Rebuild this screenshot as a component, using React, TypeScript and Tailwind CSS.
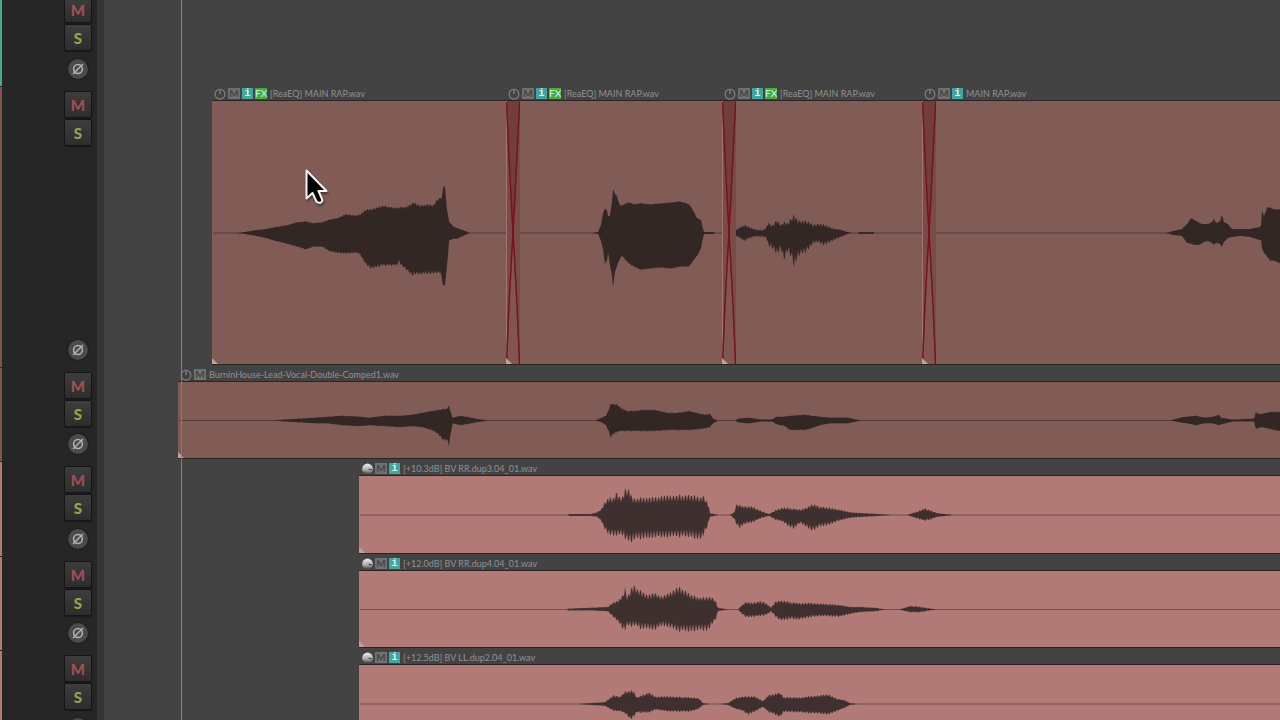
import React, { useMemo } from 'react';

// Left edge of the timeline, every clip position is counted from the window edge
const TIMELINE_LEFT = 104;

// [x, height above the centre line, height below the centre line]
type Point = [number, number, number];

type Clip = {
  name: string;
  start: number;
  end?: number;
  knob?: boolean;
  info?: boolean;
  fx?: boolean;
  crossfade?: boolean;
  ribs: number;
  wave: Point[];
};

type Track = {
  id: string;
  height: string;
  strip: string;
  clipColor: string;
  waveColor: string;
  lineColor: string;
  clips: Clip[];
};

const rap1: Point[] = [
  [237, 0, 0], [245, 1, 1], [256, 3, 3], [265, 4, 5], [275, 6, 8], [287, 8, 11], [297, 11, 14], [306, 12, 17],
  [313, 10, 14], [322, 11, 14], [330, 14, 19], [337, 15, 20], [345, 19, 21], [357, 18, 20], [360, 19, 22],
  [366, 24, 32], [371, 24, 36], [383, 28, 33], [393, 26, 33], [397, 26, 33], [399, 26, 29], [401, 27, 33],
  [405, 26, 36], [412, 30, 43], [414, 31, 42], [420, 28, 42], [427, 29, 41], [433, 28, 41], [437, 34, 41],
  [440, 36, 40], [442, 38, 48], [444, 51, 57], [445, 46, 52], [447, 25, 35], [449, 12, 8], [453, 7, 6],
  [457, 5, 6], [463, 3, 3], [470, 0, 0],
];

const rap2: Point[] = [
  [593, 0, 0], [598, 1, 1], [601, 8, 8], [603, 20, 17], [605, 25, 31], [607, 23, 28], [608, 17, 20], [610, 18, 32],
  [612, 32, 44], [613, 44, 54], [615, 40, 40], [617, 37, 33], [620, 28, 26], [622, 28, 23], [628, 31, 30],
  [634, 29, 34], [640, 30, 37], [650, 29, 36], [661, 30, 35], [672, 31, 36], [680, 32, 34], [687, 30, 34],
  [690, 28, 33], [693, 23, 28], [697, 15, 23], [699, 14, 20], [701, 13, 15], [703, 4, 5], [704, 1, 1],
  [713, 1, 1], [716, 0, 0],
];

const rap3: Point[] = [
  [730, 0, 0], [735, 2, 3], [738, 5, 4], [744, 9, 9], [748, 7, 6], [755, 4, 4], [763, 3, 4], [766, 6, 5],
  [768, 11, 12], [772, 8, 16], [777, 14, 22], [781, 9, 18], [784, 12, 29], [788, 10, 18], [791, 16, 26],
  [794, 19, 35], [798, 14, 26], [806, 13, 20], [813, 9, 11], [818, 10, 10], [824, 9, 13], [833, 5, 8],
  [840, 4, 5], [848, 1, 1], [852, 0, 0], [858, 0, 0], [859, 1, 1], [874, 1, 1], [875, 0, 0],
];

const rap4: Point[] = [
  [1166, 0, 0], [1173, 2, 2], [1182, 4, 3], [1187, 9, 10], [1191, 15, 11], [1195, 13, 12], [1200, 10, 12],
  [1204, 9, 9], [1208, 9, 8], [1213, 12, 11], [1214, 15, 12], [1216, 10, 10], [1220, 12, 11], [1222, 18, 14],
  [1224, 11, 9], [1228, 9, 5], [1232, 4, 4], [1240, 4, 3], [1250, 4, 4], [1259, 6, 7], [1261, 7, 7],
  [1262, 23, 16], [1264, 17, 20], [1267, 26, 24], [1270, 26, 28], [1274, 24, 28], [1280, 24, 31],
  [1320, 22, 28], [1340, 0, 0],
];

const leadDouble: Point[] = [
  [274, 0, 0], [283, 1, 1], [300, 2, 2], [315, 3, 3], [328, 4, 3], [342, 5, 5], [360, 4, 6], [369, 3, 5],
  [385, 5, 6], [400, 5, 7], [412, 6, 6], [422, 8, 7], [432, 10, 10], [438, 11, 14], [443, 12, 20], [446, 12, 20],
  [448, 14, 22], [449, 15, 26], [450, 12, 18], [452, 4, 6], [453, 3, 3], [460, 5, 5], [466, 4, 4], [476, 2, 2],
  [488, 0, 0], [595, 0, 0], [602, 3, 2], [606, 5, 5], [609, 12, 12], [611, 18, 18], [613, 17, 14], [617, 17, 12],
  [621, 13, 11], [627, 10, 11], [633, 10, 11], [644, 11, 11], [656, 11, 11], [667, 8, 10], [677, 8, 10],
  [689, 10, 10], [700, 7, 9], [706, 6, 8], [710, 7, 7], [713, 2, 3], [718, 0, 0], [735, 0, 0], [738, 2, 2],
  [748, 3, 3], [762, 1, 1], [772, 1, 1], [777, 4, 4], [785, 4, 6], [790, 5, 10], [805, 6, 10], [812, 5, 8],
  [820, 4, 5], [830, 3, 3], [848, 3, 3], [861, 0, 0], [1170, 0, 0], [1180, 3, 2], [1187, 4, 3], [1196, 5, 5],
  [1205, 3, 3], [1213, 4, 3], [1219, 6, 5], [1221, 3, 4], [1233, 1, 1], [1254, 2, 1], [1256, 9, 9], [1258, 7, 8],
  [1262, 7, 7], [1270, 9, 9], [1280, 9, 11], [1320, 8, 9], [1340, 0, 0],
];

const backing3: Point[] = [
  [568, 0, 0], [569, 1, 1], [590, 1, 1], [597, 3, 2], [601, 6, 6], [605, 14, 16], [609, 19, 21], [614, 18, 22],
  [616, 24, 22], [622, 19, 22], [625, 28, 25], [627, 28, 28], [629, 29, 29], [632, 18, 27], [640, 18, 25],
  [650, 18, 24], [660, 20, 24], [672, 21, 23], [690, 21, 23], [700, 19, 26], [701, 20, 27], [704, 20, 20],
  [707, 14, 14], [709, 9, 6], [710, 2, 2], [719, 0, 0], [730, 0, 0], [734, 3, 4], [737, 12, 11], [739, 11, 14],
  [746, 9, 9], [752, 9, 8], [762, 4, 3], [769, 1, 1], [775, 5, 5], [782, 8, 7], [793, 7, 15], [800, 6, 9],
  [807, 8, 13], [813, 12, 17], [820, 9, 12], [827, 8, 11], [840, 6, 6], [851, 3, 3], [865, 2, 2], [880, 1, 1],
  [891, 0, 0], [907, 0, 0], [912, 2, 2], [918, 4, 4], [924, 7, 6], [930, 5, 5], [938, 2, 2], [953, 0, 0],
];

const backing4: Point[] = [
  [567, 0, 0], [568, 1, 1], [590, 2, 1], [608, 3, 2], [612, 7, 7], [617, 9, 12], [623, 16, 22], [625, 23, 22],
  [627, 14, 18], [634, 26, 17], [640, 20, 20], [648, 15, 20], [655, 18, 22], [662, 14, 17], [670, 18, 19],
  [677, 24, 23], [683, 22, 23], [690, 16, 23], [697, 13, 22], [707, 13, 23], [713, 13, 15], [716, 8, 10],
  [718, 2, 2], [728, 0, 0], [738, 0, 0], [742, 5, 5], [746, 8, 8], [752, 7, 8], [760, 9, 7], [766, 7, 6],
  [771, 2, 2], [775, 8, 7], [780, 10, 12], [790, 8, 10], [800, 7, 11], [810, 7, 8], [825, 6, 7], [840, 5, 8],
  [850, 3, 5], [860, 3, 3], [875, 2, 2], [886, 0, 0], [899, 0, 0], [902, 1, 1], [910, 4, 3], [920, 3, 3],
  [930, 1, 1], [937, 0, 0],
];

const backing2: Point[] = [
  [579, 0, 0], [590, 1, 1], [605, 2, 2], [613, 9, 7], [620, 8, 8], [625, 13, 10], [630, 14, 16], [634, 13, 13],
  [637, 7, 9], [649, 12, 9], [655, 8, 6], [670, 8, 8], [690, 7, 8], [699, 6, 5], [703, 1, 1], [710, 0, 0],
  [719, 0, 0], [728, 1, 1], [735, 6, 5], [742, 8, 7], [748, 8, 11], [755, 8, 8], [763, 3, 3], [768, 9, 8],
  [773, 10, 10], [780, 12, 14], [784, 7, 8], [800, 7, 9], [818, 9, 10], [828, 10, 11], [836, 6, 8], [845, 4, 4],
  [850, 1, 1], [858, 0, 0],
];

const dim = { clipColor: 'bg-[#815b56]', waveColor: 'fill-[#332726]', lineColor: 'fill-[#573b38]' };
const bright = { clipColor: 'bg-[#b27a77]', waveColor: 'fill-[#3f3030]', lineColor: 'fill-[#744c4b]' };

const tracks: Track[] = [
  {
    id: 'Main rap', height: 'h-[281px]', strip: 'bg-[#815550]', ...dim,
    clips: [
      { name: '[ReaEQ] MAIN RAP.wav', start: 212, end: 506, info: true, fx: true, ribs: 0.08, wave: rap1 },
      { name: '[ReaEQ] MAIN RAP.wav', start: 506, end: 722, info: true, fx: true, crossfade: true, ribs: 0.03, wave: rap2 },
      { name: '[ReaEQ] MAIN RAP.wav', start: 722, end: 922, info: true, fx: true, crossfade: true, ribs: 0.35, wave: rap3 },
      { name: 'MAIN RAP.wav', start: 922, info: true, crossfade: true, ribs: 0.04, wave: rap4 },
    ],
  },
  {
    id: 'Lead double', height: 'h-[94px]', strip: 'bg-[#815550]', ...dim,
    clips: [{ name: 'BurninHouse-Lead-Vocal-Double-Comped1.wav', start: 178, ribs: 0.12, wave: leadDouble }],
  },
  {
    id: 'BV 3', height: 'h-[95px]', strip: 'bg-[#b27a77]', ...bright,
    clips: [{ name: '[+10.3dB] BV RR.dup3.04_01.wav', start: 359, knob: true, info: true, ribs: 0.35, wave: backing3 }],
  },
  {
    id: 'BV 4', height: 'h-[94px]', strip: 'bg-[#b27a77]', ...bright,
    clips: [{ name: '[+12.0dB] BV RR.dup4.04_01.wav', start: 359, knob: true, info: true, ribs: 0.35, wave: backing4 }],
  },
  {
    id: 'BV 2', height: 'h-[95px]', strip: 'bg-[#b27a77]', ...bright,
    clips: [{ name: '[+12.5dB] BV LL.dup2.04_01.wav', start: 359, knob: true, info: true, ribs: 0.25, wave: backing2 }],
  },
];

// Builds the closed outline of a waveform around y = 0
function buildWavePath(points: Point[], ribs: number) {
  const upper: string[] = [];
  const lower: string[] = [];
  for (let i = 0; i < points.length - 1; i++) {
    const [x0, u0, d0] = points[i];
    const [x1, u1, d1] = points[i + 1];
    for (let x = x0; x < x1; x++) {
      const t = (x - x0) / (x1 - x0);
      const noise = Math.abs(Math.sin(x * 12.9898) * 43758.5453) % 1;
      // every third column dips deeper, that gives the comb look of a sung note
      const dip = ribs * (x % 3 === 0 ? 1 : noise * 0.4);
      upper.push(`${x} ${(-(u0 + (u1 - u0) * t) * (1 - dip)).toFixed(1)}`);
      lower.push(`${x} ${((d0 + (d1 - d0) * t) * (1 - dip)).toFixed(1)}`);
    }
  }
  return `M${upper.join('L')}L${lower.reverse().join('L')}Z`;
}

function Waveform({ clip, waveColor, lineColor }: { clip: Clip; waveColor: string; lineColor: string }) {
  const path = useMemo(() => buildWavePath(clip.wave, clip.ribs), [clip]);

  return (
    <svg className="absolute inset-0 h-full w-full" aria-hidden="true">
      <rect x="1" y="50%" width="100%" height="1" className={lineColor} />
      <svg y="50%" overflow="visible">
        <path d={path} transform={`translate(${-clip.start} 0.5)`} className={waveColor} />
      </svg>
    </svg>
  );
}

function Crossfade() {
  return (
    <svg
      className="absolute inset-y-0 left-0 h-full w-3.5"
      viewBox="0 0 14 263"
      preserveAspectRatio="none"
      aria-hidden="true"
    >
      <rect width="14" height="263" fill="#7a4c49" />
      <path d="M0 0Q3 70 7 132Q11 70 14 0Z" fill="#703f3b" />
      <path d="M1 263Q4 190 7 132Q10 190 13 263Z" fill="#815550" />
      <path d="M0.5 0V263" stroke="#a07570" strokeWidth="1" />
      <path d="M0.5 1Q3.500 70 7 132Q11 195 13.500 263" fill="none" stroke="#76141c" strokeWidth="1.500" />
      <path d="M13.500 1Q10.500 70 7 132Q3 195 0.500 263" fill="none" stroke="#76141c" strokeWidth="1.500" />
    </svg>
  );
}

function PowerIcon() {
  return (
    <svg width="12" height="12" viewBox="0 0 12 12" fill="none" stroke="#858585" aria-hidden="true">
      <circle cx="6" cy="6.200" r="4.900" strokeWidth="1.100" />
      <path d="M6 1.500V6" strokeWidth="1.300" />
    </svg>
  );
}

function VolumeKnob() {
  return (
    <svg width="12" height="12" viewBox="0 0 12 12" aria-hidden="true">
      <defs>
        <linearGradient id="knob" x1="0" y1="0" x2="0" y2="1">
          <stop offset="0.100" stopColor="#e2e2e2" />
          <stop offset="0.600" stopColor="#a8a8a8" />
          <stop offset="1" stopColor="#3a3a3a" />
        </linearGradient>
      </defs>
      <circle cx="6.500" cy="6" r="5.400" fill="url(#knob)" />
      <path d="M7.500 6.200L11.200 6.900" stroke="#3c3c3c" strokeWidth="1" />
    </svg>
  );
}

function ClipView({ clip, track }: { clip: Clip; track: Track }) {
  return (
    <div
      className={`flex flex-col min-w-0 ${clip.end ? 'shrink-0' : 'flex-1'}`}
      style={clip.end ? { width: clip.end - clip.start } : undefined}
    >
      <div className="flex items-center gap-0.5 h-[13px] pl-0.5 text-[10px]">
        <button aria-label="Volume" className="shrink-0">{clip.knob ? <VolumeKnob /> : <PowerIcon />}</button>
        <button className="w-3 h-[11px] shrink-0 bg-[#707070] text-[#454545] leading-[11px] font-bold">M</button>
        {clip.info && (
          <button className="w-[11px] h-[11px] shrink-0 bg-[#43a59f] text-[#dff5f2] leading-[11px] font-bold font-['Liberation_Mono',monospace]">i</button>
        )}
        {clip.fx && (
          <button className="w-3 h-[11px] shrink-0 bg-[#46ac4a] text-[#dcf5dc] leading-[11px]">FX</button>
        )}
        <span className="pl-px whitespace-nowrap text-[9px] leading-[13px] text-[#929292]">{clip.name}</span>
      </div>
      <div className={`relative flex-1 border-y border-[#2b2423] ${track.clipColor}`}>
        <Waveform clip={clip} waveColor={track.waveColor} lineColor={track.lineColor} />
        {clip.crossfade && <Crossfade />}
        <svg className="absolute bottom-0 left-0" width="6" height="6" aria-hidden="true">
          <path d="M0 0L6 6H0Z" fill="#bfa39e" />
        </svg>
      </div>
    </div>
  );
}

function TrackButton({ label, title, color }: { label: string; title: string; color: string }) {
  return (
    <button
      title={title}
      className={`w-7 h-[27px] shrink-0 rounded-xs border border-[#151515] bg-linear-to-b from-[#3d3d3d] to-[#2d2d2d] shadow-[0_1px_1px_#191919] text-[15px] leading-6 font-black ${color}`}
    >
      {label}
    </button>
  );
}

function TrackControls({ strip }: { strip: string }) {
  return (
    <div className="flex w-[97px] shrink-0 bg-[#262626]">
      <div className={`w-0.5 border-b border-[#262626] ${strip}`} />
      <div className="flex flex-1 flex-col items-center gap-px pt-1 pb-2 pl-[62px] pr-[5px]">
        <TrackButton label="M" title="Mute" color="text-[#a04f54]" />
        <TrackButton label="S" title="Solo" color="text-[#98a253]" />
        <button title="Phase" className="mt-auto w-5 h-5 shrink-0 rounded-full bg-[#4b4b4b] shadow-[0_0_2px_#111]">
          <svg width="20" height="20" viewBox="0 0 20 20" fill="none" stroke="#b4b4b4" strokeWidth="1.500" aria-hidden="true">
            <circle cx="10" cy="10" r="4.400" />
            <path d="M5 15L15 5" />
          </svg>
        </button>
      </div>
    </div>
  );
}

function MousePointer() {
  return (
    <svg className="absolute left-[303px] top-[166px] drop-shadow-[1px_2px_1px_#00000066] pointer-events-none" width="28" height="42" viewBox="0 0 28 42" aria-hidden="true">
      <path
        d="M3.500 4.500V32.500L9.500 27L13.500 35.500Q15.500 37.500 18 36.500Q20 35 19 33L15.500 25H23.500Z"
        fill="#050505"
        stroke="#f5f5f5"
        strokeWidth="2"
        strokeLinejoin="round"
      />
    </svg>
  );
}

export default function App() {
  return (
    <div className="relative h-screen overflow-hidden bg-[#434343] font-['Lato',sans-serif]">
      {/* Scrolled track above the first visible clips */}
      <div className="flex h-[87px] items-end">
        <div className="flex h-[95px] shrink-0">
          <TrackControls strip="bg-[#4aa989]" />
          <div className="w-[7px] bg-[#343434]" />
        </div>
      </div>

      {tracks.map((track) => (
        <div key={track.id} className={`flex ${track.height}`}>
          <TrackControls strip={track.strip} />
          <div className="w-[7px] shrink-0 bg-[#343434]" />
          <div
            className="flex flex-1 min-w-0 overflow-hidden pb-[3px]"
            style={{ paddingLeft: track.clips[0].start - TIMELINE_LEFT }}
          >
            {track.clips.map((clip) => (
              <ClipView key={clip.start} clip={clip} track={track} />
            ))}
          </div>
        </div>
      ))}

      {/* Edit cursor */}
      <div className="absolute inset-y-0 left-[181px] w-px bg-[#4a9a84]" />
      <MousePointer />
    </div>
  );
}
